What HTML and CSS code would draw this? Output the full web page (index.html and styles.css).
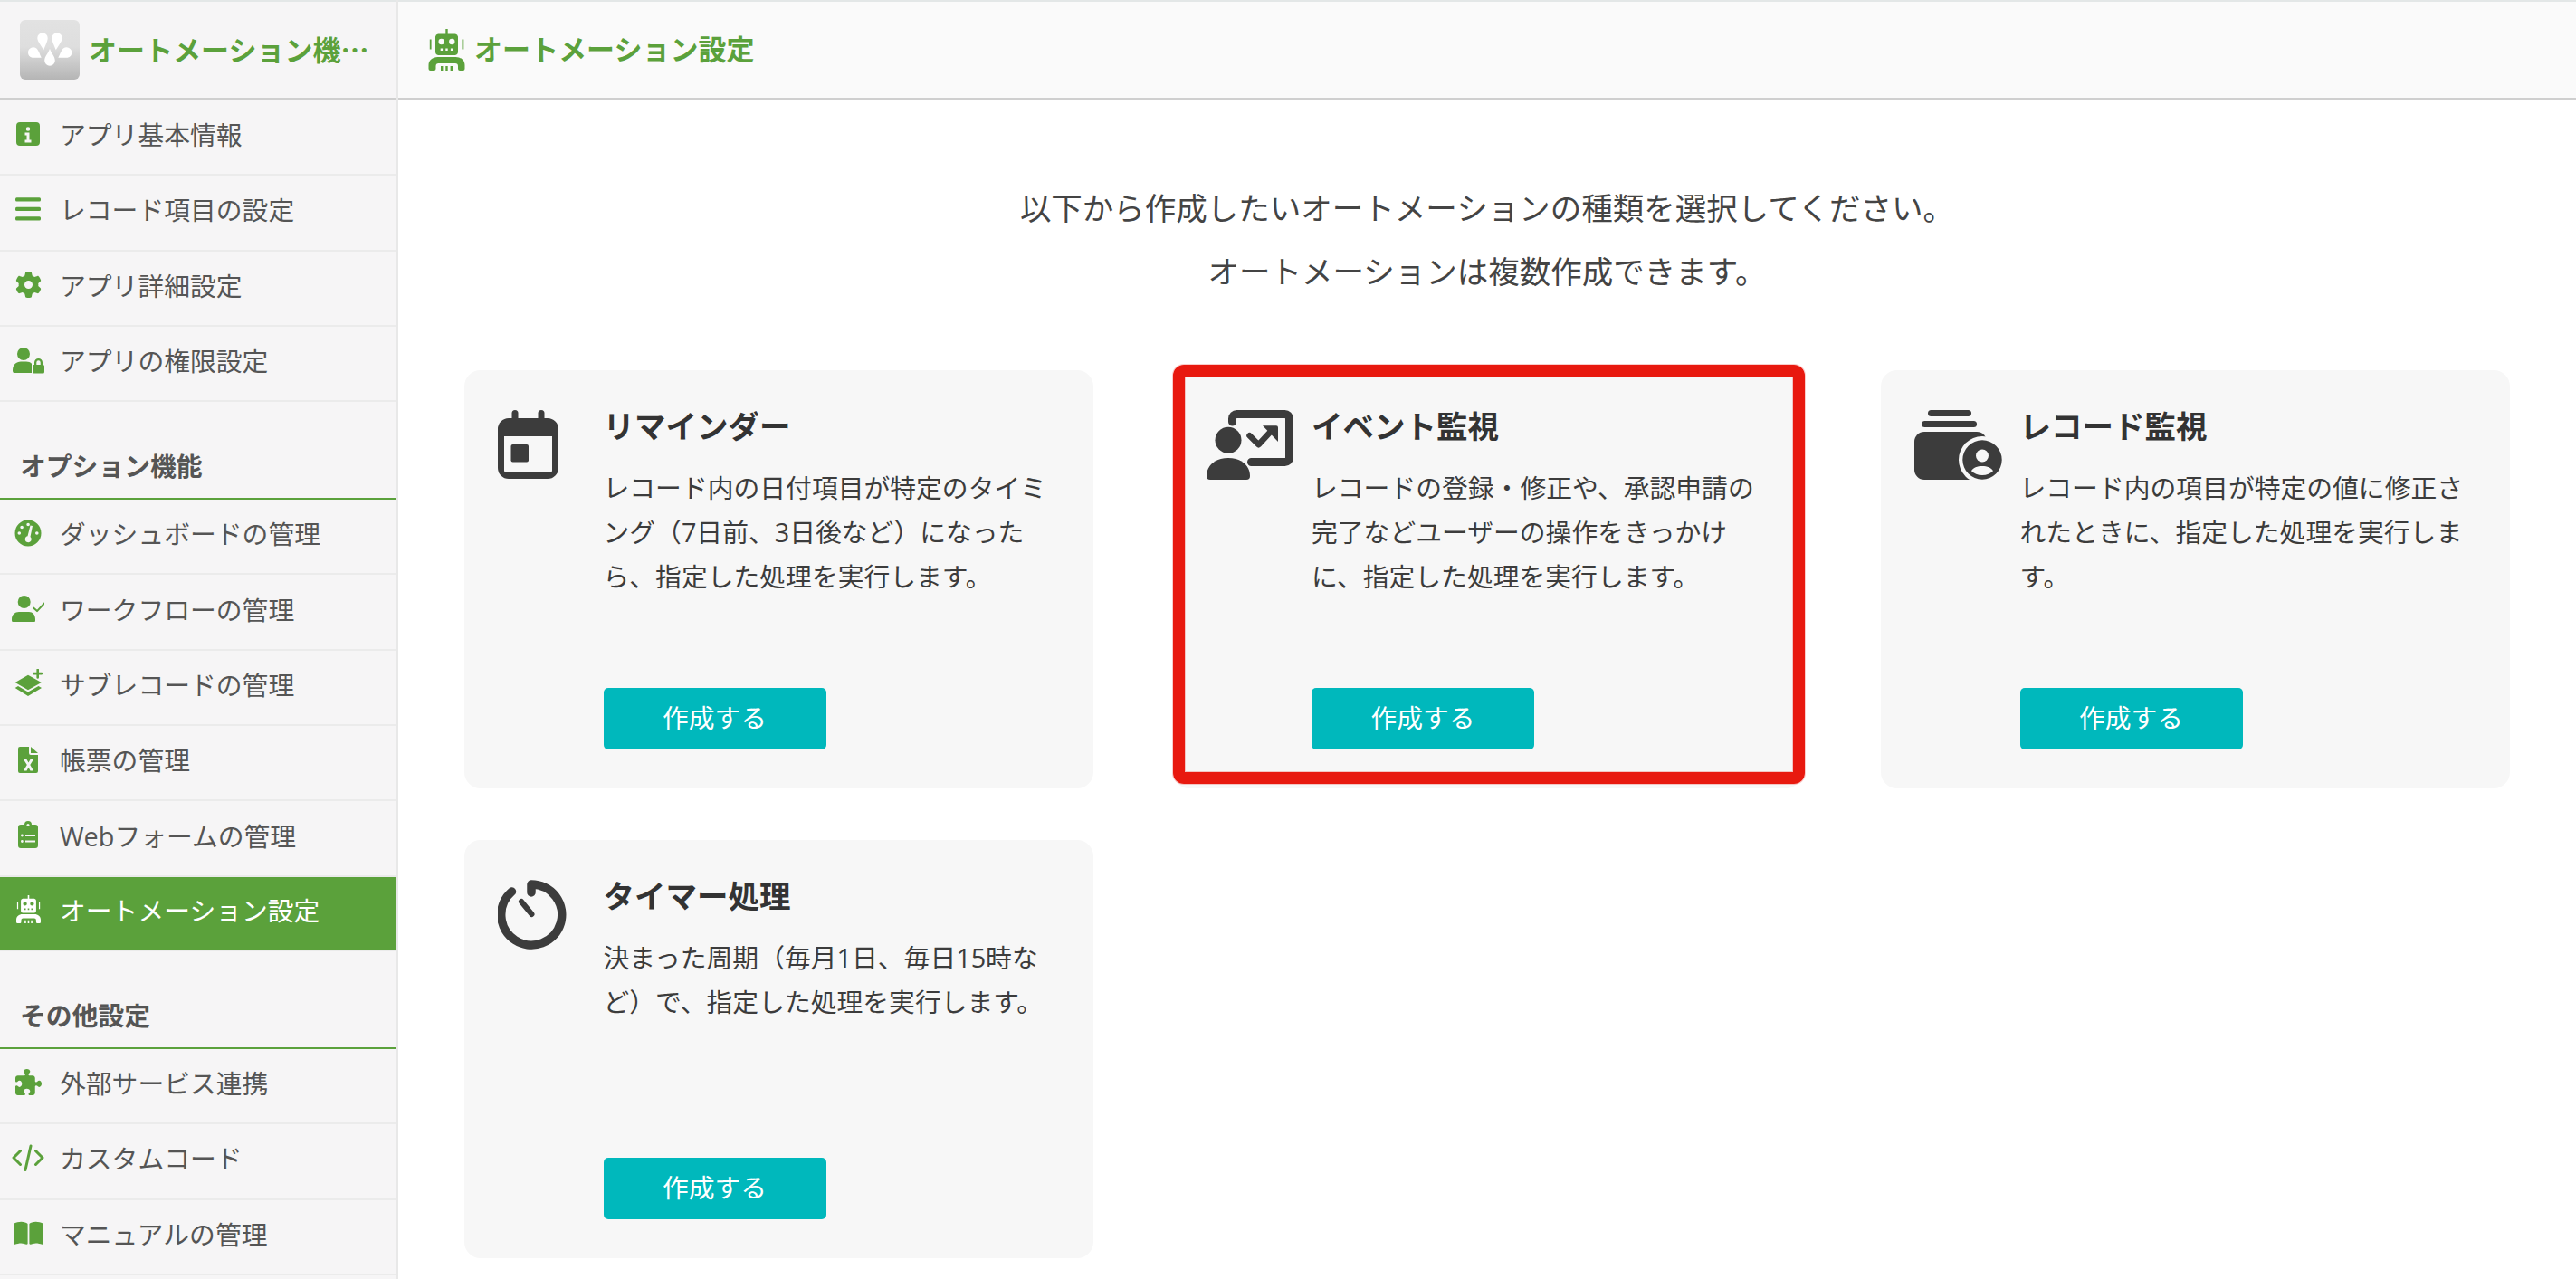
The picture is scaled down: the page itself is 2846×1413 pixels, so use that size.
FILE: index.html
```html
<!DOCTYPE html>
<html lang="ja">
<head>
<meta charset="utf-8">
<title>オートメーション設定</title>
<link rel="stylesheet" href="styles.css">
</head>
<body>
<svg class="defs" width="0" height="0" aria-hidden="true">
  <symbol id="robot" viewBox="0 0 40 46">
    <path fill-rule="evenodd" d="M18.800 0h2.400v5.500h-2.400zM10.500 5.500h19a3.500 3.500 0 0 1 3 3v17.500a3.500 3.500 0 0 1-3 3h-19a3.500 3.500 0 0 1-3-3V8.500a3.500 3.500 0 0 1 3-3zM11 14a3.200 3.200 0 1 0 6.400 0a3.200 3.200 0 1 0-6.400 0zM22.600 14a3.200 3.200 0 1 0 6.400 0a3.200 3.200 0 1 0-6.400 0zM13.200 21.500v2.600h2.400v-2.600zM18.800 21.500v2.600h2.400v-2.600zM24.400 21.500v2.600h2.400v-2.600zM1.300 11.500h1.800v11H1.300zM37 11.500h1.800v11H37zM10 31h20c5.500 0 10 3.500 10 9v4a2 2 0 0 1-2 2h-3.500a2 2 0 0 1-2-2v-3a3 3 0 0 0-3-3H11a3 3 0 0 0-3 3v3a2 2 0 0 1-2 2H2a2 2 0 0 1-2-2v-4c0-5.500 4.500-9 10-9zM13.500 41h2.400v5h-2.400zM18.800 41h2.400v5h-2.400zM24.100 41h2.400v5h-2.400z"/>
  </symbol>
  <symbol id="i-info" viewBox="0 0 36 32">
    <path fill-rule="evenodd" d="M9 3h18a4 4 0 0 1 4 4v18a4 4 0 0 1-4 4H9a4 4 0 0 1-4-4V7a4 4 0 0 1 4-4zM15.700 10.500a2.300 2.300 0 1 0 4.600 0a2.300 2.300 0 1 0-4.600 0zM14.500 14.500v3h2v5h-2v3h7v-3h-2v-8z"/>
  </symbol>
  <symbol id="i-list" viewBox="0 0 36 32">
    <rect x="4" y="3.200" width="28" height="4.200" rx="1.500"/>
    <rect x="4" y="13.700" width="28" height="4.200" rx="1.500"/>
    <rect x="4" y="24.200" width="28" height="4.200" rx="1.500"/>
  </symbol>
  <symbol id="i-gear" viewBox="0 0 512 512">
    <path d="M495.900 166.600c3.200 8.700 .5 18.400-6.400 24.600l-43.300 39.400c1.100 8.300 1.700 16.800 1.700 25.400s-.6 17.100-1.700 25.400l43.300 39.400c6.900 6.200 9.600 15.900 6.400 24.600c-4.400 11.900-9.700 23.300-15.800 34.300l-4.700 8.100c-6.600 11-14 21.400-22.100 31.200c-5.900 7.200-15.700 9.600-24.500 6.800l-55.700-17.700c-13.400 10.300-28.200 18.900-44 25.400l-12.500 57.100c-2 9.100-9 16.300-18.200 17.800c-13.800 2.300-28 3.500-42.500 3.500s-28.700-1.200-42.500-3.500c-9.200-1.500-16.200-8.700-18.200-17.800l-12.500-57.100c-15.800-6.500-30.600-15.100-44-25.400L83.100 425.900c-8.800 2.800-18.600 .3-24.500-6.800c-8.100-9.800-15.500-20.200-22.100-31.200l-4.700-8.100c-6.100-11-11.400-22.400-15.800-34.300c-3.200-8.700-.5-18.400 6.400-24.600l43.300-39.400C64.600 273.100 64 264.600 64 256s.6-17.100 1.700-25.400L22.400 191.200c-6.900-6.200-9.600-15.900-6.400-24.600c4.400-11.900 9.700-23.300 15.800-34.300l4.700-8.100c6.600-11 14-21.400 22.100-31.200c5.900-7.200 15.700-9.600 24.500-6.800l55.700 17.700c13.400-10.300 28.200-18.900 44-25.400l12.500-57.100c2-9.100 9-16.300 18.200-17.800C227.300 1.200 241.500 0 256 0s28.700 1.200 42.500 3.500c9.200 1.500 16.200 8.700 18.200 17.800l12.500 57.100c15.800 6.500 30.600 15.100 44 25.400l55.700-17.700c8.800-2.800 18.600-.3 24.500 6.800c8.100 9.800 15.500 20.200 22.100 31.200l4.700 8.100c6.100 11 11.400 22.400 15.800 34.300zM256 336a80 80 0 1 0 0-160 80 80 0 1 0 0 160z"/>
  </symbol>
  <symbol id="i-userlock" viewBox="0 0 36 32">
    <circle cx="13" cy="9" r="7"/>
    <path d="M1 27c0-6 4-9.500 9-9.500h6c2.500 0 4.500 .8 6 2.200v10.300H3a2 2 0 0 1-2-2z"/>
    <path fill-rule="evenodd" d="M25 21v-2.500a4.500 4.500 0 0 1 9 0V21h.5a1.500 1.500 0 0 1 1.500 1.500V29a1.500 1.500 0 0 1-1.500 1.500h-10A1.500 1.500 0 0 1 23 29v-6.500A1.500 1.500 0 0 1 24.500 21zM27.300 21h4.400v-2.500a2.200 2.200 0 0 0-4.400 0z"/>
  </symbol>
  <symbol id="i-gauge" viewBox="0 0 36 32">
    <path fill-rule="evenodd" d="M18 1.500a14.500 14.500 0 1 1 0 29a14.500 14.500 0 0 1 0-29zM16.300 6.500a1.800 1.800 0 1 0 3.600 0a1.800 1.800 0 1 0-3.600 0zM9.300 9.500a1.800 1.800 0 1 0 3.600 0a1.800 1.800 0 1 0-3.600 0zM6.500 16a1.800 1.800 0 1 0 3.600 0a1.800 1.800 0 1 0-3.600 0zM26 16a1.800 1.800 0 1 0 3.600 0a1.800 1.800 0 1 0-3.600 0zM20.500 7.500l-3 11.800a3.500 3.500 0 1 0 3 .8l2.500-12.200z"/>
  </symbol>
  <symbol id="i-usercheck" viewBox="0 0 36 32">
    <circle cx="13.700" cy="9" r="7"/>
    <path d="M0 28c0-5 3.500-8 8-8h11c4 0 7 3 7 8v2a1 1 0 0 1-1 1H1.500A1.500 1.500 0 0 1 0 29.500z"/>
    <path class="stroke" d="M24 15.500l4 3.600 8-8.600" stroke-width="2"/>
  </symbol>
  <symbol id="i-layers" viewBox="0 0 36 32">
    <path d="M18 6.700l14.800 8.300L18 23.300 3.700 15z"/>
    <path d="M7 19l11 6.500L29.500 19l3.500 2-15 9-14.300-9z"/>
    <path class="stroke" d="M28.700 .8v8.600M24.400 5.100H33" stroke-width="2.600"/>
  </symbol>
  <symbol id="i-file" viewBox="0 0 36 32">
    <path fill-rule="evenodd" d="M9 2h10v7a2 2 0 0 0 2 2h8v18a2 2 0 0 1-2 2H9a2 2 0 0 1-2-2V4a2 2 0 0 1 2-2zM13 16l3.800 6-3.800 6.500h3.500l2-3.700 2 3.700H24l-3.700-6.500L24 16h-3.500l-2 3.500-2-3.500z"/>
    <path d="M21 2l8 7h-8z"/>
  </symbol>
  <symbol id="i-clip" viewBox="0 0 36 32">
    <path fill-rule="evenodd" d="M14 5a4 4 0 0 1 8 0h4a3 3 0 0 1 3 3v20a3 3 0 0 1-3 3H10a3 3 0 0 1-3-3V8a3 3 0 0 1 3-3zM16.400 5.500a1.600 1.600 0 1 0 3.200 0a1.600 1.600 0 1 0-3.200 0zM10 17a1.400 1.400 0 1 0 2.800 0a1.400 1.400 0 1 0-2.800 0zM10 23.500a1.400 1.400 0 1 0 2.800 0a1.400 1.400 0 1 0-2.800 0zM15 16v2h11v-2zM15 22.500v2h11v-2z"/>
  </symbol>
  <symbol id="i-puzzle" viewBox="0 0 512 512">
    <path d="M192 104.800c0-9.200-5.800-17.300-13.200-22.800C167.200 73.300 160 61.300 160 48c0-26.500 28.700-48 64-48s64 21.500 64 48c0 13.300-7.200 25.300-18.800 34c-7.400 5.500-13.200 13.600-13.200 22.800c0 12.800 10.400 23.200 23.200 23.200H336c26.500 0 48 21.500 48 48v56.800c0 12.800 10.400 23.200 23.200 23.200c9.200 0 17.300-5.800 22.800-13.200c8.700-11.600 20.700-18.800 34-18.800c26.500 0 48 28.700 48 64s-21.500 64-48 64c-13.300 0-25.300-7.200-34-18.800c-5.500-7.400-13.600-13.200-22.800-13.200c-12.800 0-23.200 10.400-23.200 23.200V464c0 26.500-21.500 48-48 48H279.200c-12.800 0-23.200-10.400-23.200-23.200c0-9.200 5.800-17.300 13.200-22.800c11.600-8.700 18.800-20.700 18.800-34c0-26.500-28.700-48-64-48s-64 21.500-64 48c0 13.300 7.200 25.300 18.800 34c7.400 5.500 13.200 13.600 13.200 22.800c0 12.800-10.400 23.200-23.200 23.200H48c-26.500 0-48-21.500-48-48V343.200C0 330.400 10.400 320 23.200 320c9.200 0 17.300 5.800 22.800 13.200C54.700 344.800 66.700 352 80 352c26.500 0 48-28.700 48-64s-21.500-64-48-64c-13.300 0-25.300 7.200-34 18.800C40.500 250.200 32.400 256 23.200 256C10.400 256 0 245.600 0 232.800V176c0-26.500 21.500-48 48-48H168.800c12.800 0 23.200-10.400 23.200-23.200z"/>
  </symbol>
  <symbol id="i-code" viewBox="0 0 36 32">
    <path class="stroke" d="M9.500 8.500L2 16l7.500 7.500M26.500 8.500L34 16l-7.500 7.500M21 3l-6 26.500" stroke-width="3"/>
  </symbol>
  <symbol id="i-book" viewBox="0 0 576 512">
    <path d="M249.600 471.500c10.800 3.800 22.400-4.100 22.400-15.500V78.600c0-4.200-1.600-8.400-5-11C247.400 52 202.400 32 144 32C93.500 32 46.300 46.300 18.100 56.100C6.800 60 0 71 0 83V454.100c0 11.900 12.800 20.200 24.100 16.500C55.600 460.100 105.500 448 144 448c33.900 0 79 14 105.600 23.500zm76.800 0C353 462 398.100 448 432 448c38.500 0 88.400 12.100 119.900 22.600c11.300 3.800 24.100-4.600 24.100-16.500V83c0-12-6.800-23-18.100-26.900C529.700 46.300 482.500 32 432 32c-58.400 0-103.400 20-123 35.600c-3.300 2.600-5 6.800-5 11V456c0 11.400 11.700 19.300 22.400 15.500z"/>
  </symbol>
</svg>

<div class="app">
  <aside class="sidebar">
    <div class="side-head">
      <div class="logo">
        <svg class="logo-mark" viewBox="0 0 66 66" aria-hidden="true">
          <path d="M19.300 20a5.700 5.700 0 0 1 11.400 0c0 4-3 9-4.500 13.300C24 29 19.300 24 19.300 20z"/>
          <path d="M35.300 20a5.700 5.700 0 0 1 11.400 0c0 4-4.700 9-6.900 13.300C38.300 29 35.300 24 35.300 20z"/>
          <path d="M9 36a5.800 5.800 0 0 1 9-4.800c2.500 1.800 4 7 5.700 10.500c-4 .3-9 0-10 0A5.800 5.800 0 0 1 9 36z"/>
          <path d="M57.300 36a5.800 5.800 0 0 0-9-4.800c-2.500 1.800-4 7-6 10.500c4 .3 9 0 10.300 0a5.800 5.800 0 0 0 4.700-5.700z"/>
          <path d="M33 31.700c1.500 5 5.800 8.500 5.800 13.200a5.800 5.800 0 0 1-11.600 0c0-4.700 4.300-8.200 5.800-13.200z"/>
        </svg>
      </div>
      <div class="app-name">オートメーション機能の設定</div>
    </div>
    <nav class="nav">
      <a class="item"><svg class="ico"><use href="#i-info"/></svg>アプリ基本情報</a>
      <a class="item"><svg class="ico"><use href="#i-list"/></svg>レコード項目の設定</a>
      <a class="item"><span class="ico-box"><svg class="ico-29"><use href="#i-gear"/></svg></span>アプリ詳細設定</a>
      <a class="item"><svg class="ico"><use href="#i-userlock"/></svg>アプリの権限設定</a>
      <div class="section">オプション機能</div>
      <a class="item"><svg class="ico"><use href="#i-gauge"/></svg>ダッシュボードの管理</a>
      <a class="item"><svg class="ico"><use href="#i-usercheck"/></svg>ワークフローの管理</a>
      <a class="item"><svg class="ico"><use href="#i-layers"/></svg>サブレコードの管理</a>
      <a class="item"><svg class="ico"><use href="#i-file"/></svg>帳票の管理</a>
      <a class="item"><svg class="ico"><use href="#i-clip"/></svg>Webフォームの管理</a>
      <a class="item active"><span class="ico-box"><svg class="ico-robot"><use href="#robot"/></svg></span>オートメーション設定</a>
      <div class="section">その他設定</div>
      <a class="item"><span class="ico-box"><svg class="ico-29"><use href="#i-puzzle"/></svg></span>外部サービス連携</a>
      <a class="item"><svg class="ico"><use href="#i-code"/></svg>カスタムコード</a>
      <a class="item"><span class="ico-box"><svg class="ico-book"><use href="#i-book"/></svg></span>マニュアルの管理</a>
      <a class="item"></a>
    </nav>
  </aside>

  <main class="main">
    <header class="main-head">
      <svg class="head-robot"><use href="#robot"/></svg>
      <h1 class="page-title">オートメーション設定</h1>
    </header>
    <div class="content">
      <div class="intro">
        <p>以下から作成したいオートメーションの種類を選択してください。</p>
        <p>オートメーションは複数作成できます。</p>
      </div>
      <div class="cards">
        <section class="card">
          <div class="card-ico">
            <svg class="svg-cal" viewBox="0 0 67 76" aria-hidden="true">
              <rect x="15.500" y="0" width="7" height="16" rx="3.500"/>
              <rect x="44.500" y="0" width="7" height="16" rx="3.500"/>
              <path fill-rule="evenodd" d="M12 9h43a12 12 0 0 1 12 12v43a12 12 0 0 1-12 12H12A12 12 0 0 1 0 64V21A12 12 0 0 1 12 9zM7 29v38a2 2 0 0 0 2 2h49a2 2 0 0 0 2-2V29z"/>
              <rect x="14.500" y="38" width="19.500" height="19.500" rx="2"/>
            </svg>
          </div>
          <div class="card-body">
            <h2 class="card-title">リマインダー</h2>
            <p class="card-text">レコード内の日付項目が特定のタイミング（7日前、3日後など）になったら、指定した処理を実行します。</p>
            <button class="btn">作成する</button>
          </div>
        </section>

        <section class="card">
          <div class="card-ico">
            <svg class="svg-event" viewBox="0 0 96 77" aria-hidden="true">
              <path class="stroke" d="M28.500 13V9.500a5 5 0 0 1 5-5H86.500a5 5 0 0 1 5 5V52.500a5 5 0 0 1-5 5H49.500" stroke-width="9" stroke-linecap="butt"/>
              <path class="stroke" d="M47.500 28.300l10 10L72 22.500" stroke-width="6.500"/>
              <path d="M62 17.300h15a2 2 0 0 1 2 2V35z"/>
              <circle cx="24" cy="33.300" r="14.500"/>
              <path d="M0 73c0-12 10-20 24-20s24 8 24 20a4 4 0 0 1-4 4H4a4 4 0 0 1-4-4z"/>
            </svg>
          </div>
          <div class="card-body">
            <h2 class="card-title">イベント監視</h2>
            <p class="card-text">レコードの登録・修正や、承認申請の完了などユーザーの操作をきっかけに、指定した処理を実行します。</p>
            <button class="btn">作成する</button>
          </div>
          <div class="highlight"></div>
        </section>

        <section class="card">
          <div class="card-ico">
            <svg class="svg-rec" viewBox="0 0 97 77" aria-hidden="true">
              <rect x="15" y="0" width="48" height="7" rx="3.500"/>
              <rect x="8" y="12" width="61" height="7" rx="3.500"/>
              <rect x="0" y="24" width="80" height="53" rx="11"/>
              <circle class="cut" cx="75" cy="55" r="26"/>
              <path fill-rule="evenodd" d="M75 33.300a21.700 21.700 0 1 1 0 43.400a21.700 21.700 0 0 1 0-43.400zM68 50.500a7 7 0 1 0 14 0a7 7 0 0 0-14 0zM63 67.300c3 3 7 4.700 12 4.700s9-1.700 12-4.700c-2-3.500-6.500-5.300-12-5.300s-10 1.800-12 5.300z"/>
            </svg>
          </div>
          <div class="card-body">
            <h2 class="card-title">レコード監視</h2>
            <p class="card-text">レコード内の項目が特定の値に修正されたときに、指定した処理を実行します。</p>
            <button class="btn">作成する</button>
          </div>
        </section>

        <section class="card">
          <div class="card-ico">
            <svg class="svg-timer" viewBox="0 0 77 77" aria-hidden="true">
              <path class="stroke" d="M37 14V5a33.500 33.500 0 1 1-21.500 8" stroke-width="9.500"/>
              <path class="stroke" d="M26 24l11.500 14" stroke-width="6"/>
            </svg>
          </div>
          <div class="card-body">
            <h2 class="card-title">タイマー処理</h2>
            <p class="card-text">決まった周期（毎月1日、毎日15時など）で、指定した処理を実行します。</p>
            <button class="btn">作成する</button>
          </div>
        </section>
      </div>
    </div>
  </main>
</div>
</body>
</html>
```

FILE: styles.css
```css
* { box-sizing: border-box; }
html, body { margin: 0; height: 100%; }
body {
  background: #fff;
  color: #3c3c3c;
  font-family: "Open Sans", "Noto Sans CJK JP", sans-serif;
  font-size: 28.8px;
  overflow: hidden;
}
.defs { position: absolute; }
.stroke { fill: none; stroke: currentColor; stroke-linecap: round; stroke-linejoin: round; }

.app {
  display: grid;
  grid-template-columns: 440px 1fr;
  height: 1413px;
  overflow: hidden;
}

/* sidebar */
.sidebar {
  background: #f6f5f6;
  border-right: 2px solid #e8e8e8;
  display: flex;
  flex-direction: column;
  min-width: 0;
}
.side-head {
  height: 111px;
  flex: none;
  display: flex;
  align-items: center;
  gap: 10px;
  padding-left: 22px;
  border-top: 2px solid #e3e7e7;
  border-bottom: 3px solid #cfcfcf;
}
.logo {
  width: 66px;
  height: 66px;
  flex: none;
  border-radius: 6px;
  background: linear-gradient(#e2e2e2 0%, #dedede 45%, #b5b5b5 100%);
}
.logo-mark { display: block; width: 66px; height: 66px; fill: #fff; }
.app-name {
  width: 311px;
  padding-bottom: 3px;
  white-space: nowrap;
  overflow: hidden;
  text-overflow: ellipsis;
  font-family: "Noto Sans CJK JP", sans-serif;
  font-size: 31px;
  font-weight: 700;
  color: #5ba13b;
  line-height: 44px;
}
.nav { display: flex; flex-direction: column; color: #555; }
.item {
  flex: none;
  height: 83.3px;
  display: flex;
  align-items: center;
  padding: 0 0 8px 13px;
  border-bottom: 2px solid #ebebeb;
  color: #555;
  white-space: nowrap;
}
.ico, .ico-box {
  width: 36px;
  height: 32px;
  margin-right: 17px;
  flex: none;
  fill: #5ba13b;
  color: #5ba13b;
}
.ico-box { display: flex; align-items: center; justify-content: center; }
.ico-29 { width: 29px; height: 29px; fill: #5ba13b; color: #5ba13b; }
.ico-robot { width: 27px; height: 31px; fill: currentColor; }
.ico-book { width: 33px; height: 29px; fill: #5ba13b; }
.item.active { background: #5ba13b; color: #fff; height: 82.3px; }
.item.active .ico-box { color: #fff; fill: #fff; }
.section {
  flex: none;
  height: 108px;
  display: flex;
  align-items: flex-end;
  padding: 0 0 15px 22px;
  line-height: 40px;
  font-weight: 700;
  color: #555;
  border-bottom: 2px solid #5ba13b;
}

/* main */
.main { display: flex; flex-direction: column; min-width: 0; }
.main-head {
  height: 111px;
  flex: none;
  display: flex;
  align-items: center;
  gap: 10px;
  padding-left: 33px;
  background: #fafafa;
  border-top: 2px solid #e3e7e7;
  border-bottom: 3px solid #cfcfcf;
}
.head-robot { width: 41px; height: 46px; fill: #5ba13b; }
.page-title {
  margin: 0;
  padding-bottom: 3px;
  font-size: 31px;
  font-weight: 700;
  color: #5ba13b;
  line-height: 44px;
}
.content { padding: 84px 73px 0; }
.intro { text-align: center; margin-bottom: 74px; font-size: 34.5px; color: #444; }
.intro p { margin: 0; line-height: 70px; }
.cards {
  display: grid;
  grid-template-columns: repeat(3, 695px);
  column-gap: 87.5px;
  row-gap: 57px;
}
.card {
  position: relative;
  height: 462px;
  background: #f7f7f7;
  border-radius: 18px;
  display: flex;
  padding: 36px 0 43px 37px;
  color: #3c3c3c;
}
.card-ico { width: 116.5px; flex: none; padding-top: 8px; fill: #3c3c3c; color: #3c3c3c; }
.card-ico svg { display: block; }
.cut { fill: #f7f7f7; }
.svg-cal { width: 67px; height: 76px; }
.svg-event { width: 96px; height: 77px; }
.svg-rec { width: 97px; height: 77px; }
.svg-timer { width: 77px; height: 77px; }
.card-body { flex: 1; display: flex; flex-direction: column; align-items: flex-start; padding-right: 42px; }
.card-title {
  margin: 0 0 18px;
  font-size: 34.5px;
  line-height: 52px;
  font-weight: 700;
  color: #333;
}
.card-text { margin: 0; line-height: 48.8px; }
.btn {
  margin-top: auto;
  width: 246px;
  height: 68px;
  padding: 0 0 6px;
  border: 0;
  border-radius: 5px;
  background: #00b8bc;
  color: #fff;
  font: inherit;
}
.highlight {
  position: absolute;
  left: 0;
  top: -6px;
  width: 698px;
  height: 463px;
  border: 13px solid #e8190f;
  border-radius: 12px;
  box-shadow: 0 0 0 1px rgba(232, 25, 15, .22), inset 0 0 0 1px rgba(232, 25, 15, .22);
  pointer-events: none;
}
```
